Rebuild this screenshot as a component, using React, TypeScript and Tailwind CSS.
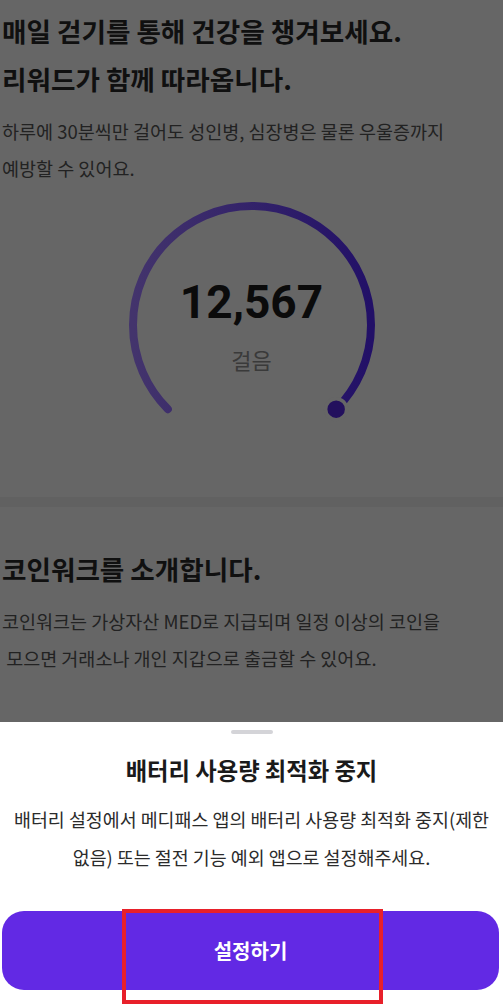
import React from 'react'

const FONT = { fontFamily: '"Noto Sans CJK KR", "Noto Sans", sans-serif' }

function StepGauge() {
  return (
    <div className="relative mx-auto w-[260px] h-[230px]">
      <svg width="260" height="230" viewBox="0 0 260 230" className="block">
        <defs>
          <linearGradient id="arc" x1="0" y1="0" x2="1" y2="0">
            <stop offset="0%" stopColor="#43346c" />
            <stop offset="100%" stopColor="#221067" />
          </linearGradient>
        </defs>
        <path
          d="M 45.85 207.15 A 119 119 0 1 1 214.15 207.15"
          fill="none"
          stroke="url(#arc)"
          strokeWidth="8"
          strokeLinecap="round"
        />
        <circle cx="214.15" cy="207.15" r="10.5" fill="#23105d" stroke="#666666" strokeWidth="3.5" />
      </svg>
      <div
        className="absolute left-0 right-0 top-[77px] text-center text-[46px] font-bold leading-none text-[#0b0b0b]"
        style={{ fontFamily: 'Roboto, "Noto Sans", sans-serif' }}
      >
        12,567
      </div>
      <div className="absolute left-0 right-0 top-[146px] text-center text-[22px] leading-none text-[#3a3a3a]">
        걸음
      </div>
    </div>
  )
}

export default function App() {
  return (
    <div className="relative w-[503px] h-[1005px] overflow-hidden flex flex-col bg-[#666666]" style={FONT}>
      {/* dimmed page */}
      <div className="flex-1 overflow-hidden">
        <section className="pt-[7px] pb-[65px] px-[2px]">
          <h1 className="text-[26.6px] font-bold leading-[48px] text-[#101010]">
            매일 걷기를 통해 건강을 챙겨보세요.
            <br />
            리워드가 함께 따라옵니다.
          </h1>
          <p className="mt-[10px] text-[18.5px] leading-[37px] text-[#222222] whitespace-nowrap">
            하루에 30분씩만 걸어도 성인병, 심장병은 물론 우울증까지
            <br />
            예방할 수 있어요.
          </p>
          <div className="mt-[15px]">
            <StepGauge />
          </div>
        </section>

        <div className="h-[10px] bg-[#616161]" />

        <section className="pt-[38px] px-[2px]">
          <h2 className="text-[26.6px] font-bold leading-[48px] text-[#101010]">코인워크를 소개합니다.</h2>
          <p className="mt-[10px] text-[18.5px] leading-[37px] text-[#222222] whitespace-pre">
            {'코인워크는 가상자산 MED로 지급되며 일정 이상의 코인을\n 모으면 거래소나 개인 지갑으로 출금할 수 있어요.'}
          </p>
        </section>
      </div>

      {/* bottom sheet */}
      <div className="h-[283px] shrink-0 bg-white flex flex-col items-center pt-[8px]">
        <div className="w-[42px] h-[4px] rounded-full bg-[#d4d4d8]" />
        <h3 className="mt-[21px] text-[23.3px] font-bold leading-[30px] text-[#1a1a1a]">배터리 사용량 최적화 중지</h3>
        <p className="mt-[15px] text-center text-[18.4px] leading-[38px] text-[#2b2b2b] whitespace-nowrap">
          배터리 설정에서 메디패스 앱의 배터리 사용량 최적화 중지(제한
          <br />
          없음) 또는 절전 기능 예외 앱으로 설정해주세요.
        </p>
        <button className="mt-[35px] ml-[2px] mr-[4px] self-stretch h-[79px] rounded-[22px] bg-[#6229e4] text-white text-[20px] font-bold">
          설정하기
        </button>
      </div>

      {/* highlight annotation */}
      <div className="absolute left-[122px] top-[909px] w-[261px] h-[95px] border-4 border-[#e8202a]" />
    </div>
  )
}
